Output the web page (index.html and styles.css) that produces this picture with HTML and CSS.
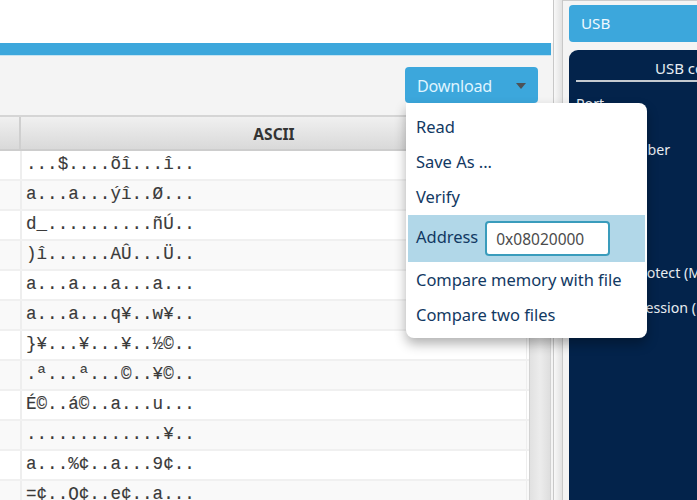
FILE: index.html
```html
<!DOCTYPE html>
<html lang="en">
<head>
<meta charset="utf-8">
<title>Device memory</title>
<link rel="stylesheet" href="styles.css">
</head>
<body>
<div class="app">
  <main class="memory">
    <div class="blank"></div>
    <div class="rule"></div>
    <div class="toolbar">
      <div class="download"><span>Download</span><i class="caret"></i>
        <div class="menu">
          <div class="item">Read</div>
          <div class="item">Save As ...</div>
          <div class="item">Verify</div>
          <div class="item active"><span>Address</span><div class="field">0x08020000</div></div>
          <div class="item">Compare memory with file</div>
          <div class="item">Compare two files</div>
        </div>
      </div>
    </div>
    <div class="table">
      <div class="head"><div class="c1"></div><div class="c2"><span>ASCII</span></div><div class="corner"></div></div>
      <div class="body">
        <div class="rows">
          <div class="row"><div class="c1"></div><div class="c2">...$....õî...î..</div></div>
          <div class="row"><div class="c1"></div><div class="c2">a...a...ýî..Ø...</div></div>
          <div class="row"><div class="c1"></div><div class="c2">d_..........ñÚ..</div></div>
          <div class="row"><div class="c1"></div><div class="c2">)î......AÛ...Ü..</div></div>
          <div class="row"><div class="c1"></div><div class="c2">a...a...a...a...</div></div>
          <div class="row"><div class="c1"></div><div class="c2">a...a...q¥..w¥..</div></div>
          <div class="row"><div class="c1"></div><div class="c2">}¥...¥...¥..½©..</div></div>
          <div class="row"><div class="c1"></div><div class="c2">.ª...ª...©..¥©..</div></div>
          <div class="row"><div class="c1"></div><div class="c2">É©..á©..a...u...</div></div>
          <div class="row"><div class="c1"></div><div class="c2">.............¥..</div></div>
          <div class="row"><div class="c1"></div><div class="c2">a...%¢..a...9¢..</div></div>
          <div class="row"><div class="c1"></div><div class="c2">=¢..Q¢..e¢..a...</div></div>
        </div>
        <div class="scrollbar"></div>
      </div>
    </div>
  </main>
  <div class="divider"></div>
  <aside class="side">
    <div class="select">USB</div>
    <div class="config">
      <div class="title">USB configuration</div>
      <div class="opt port">Port</div>
      <div class="opt serial">Serial number</div>
      <div class="opt read">Read Unprotect (MCU)</div>
      <div class="opt tz">TZEN Regression (MCU)</div>
    </div>
  </aside>
</div>
</body>
</html>
```
FILE: styles.css
```css
* { box-sizing: border-box; }
body {
  margin: 0;
  overflow: hidden;
  background: #f4f4f4;
  font: 16.5px/20px "Noto Sans", "Open Sans", sans-serif;
  color: #03234b;
  white-space: nowrap;
}
.app { display: flex; width: 697px; height: 500px; overflow: hidden; }
.memory { width: 553px; flex: none; display: flex; flex-direction: column; padding-right: 2px; }
.blank { height: 43px; flex: none; background: #fff; margin-right: -2px; }
.rule { height: 13px; flex: none; background: #3ca7dc; border-bottom: 1px solid #c5e3f1; }
.toolbar { height: 59px; flex: none; display: flex; justify-content: flex-end; padding: 11px 13px 0 0; }
.download {
  position: relative;
  z-index: 2;
  width: 133px;
  height: 36px;
  padding: 1px 12px 0;
  display: flex;
  align-items: center;
  justify-content: space-between;
  border-radius: 4px;
  background: #3ca7dc;
  color: #dff4ff;
}
.download > span { font-size: 16.2px; letter-spacing: -0.25px; }
.caret { border: 5px solid transparent; border-top: 6px solid #4d5256; border-bottom: 0; margin-top: 1px; }
.menu {
  position: absolute;
  left: 1px;
  top: 36px;
  width: 241px;
  height: 235px;
  padding: 7px 2px 0;
  border-radius: 0 8px 8px 8px;
  background: #fff;
  color: #123963;
  box-shadow: 0 6px 12px rgba(0, 0, 0, .3);
}
.item { height: 35px; padding: 0 8px 2px; display: flex; align-items: center; letter-spacing: -0.03px; }
.active { height: 47px; padding-bottom: 0; background: #b1d7e8; gap: 7px; }
.active ~ .item { padding-bottom: 0; }
.active span { margin-top: -4px; }
.field {
  width: 125px;
  height: 35px;
  padding: 0 9px;
  display: flex;
  align-items: center;
  border: 2px solid #3a9cbc;
  border-radius: 4px;
  background: #fff;
  color: #4b4b4b;
  font-size: 15.5px;
  letter-spacing: 0;
}
.table { flex: 1; min-height: 0; display: flex; flex-direction: column; }
.head {
  height: 36px;
  flex: none;
  display: flex;
  border-top: 2px solid #d5d5d5;
  border-bottom: 2px solid #cdcdcd;
  background: linear-gradient(#f0f0f0, #d9d9d9);
}
.c1 { width: 22px; flex: none; border-right: 2px solid #eee; }
.c2 { flex: 1; }
.head .c1 { width: 21px; border-right-color: #cfcfcf; }
.head .c2 {
  display: flex;
  align-items: center;
  justify-content: center;
  padding-top: 2px;
  font-size: 15.5px;
  font-weight: 700;
  color: #333;
}
.corner { width: 24px; border-left: 1px solid #ccc; }
.body { flex: 1; min-height: 0; display: flex; overflow: hidden; }
.rows { width: 529px; flex: none; }
.row { height: 30px; display: flex; border-bottom: 2px solid #f0f0f0; background: #fff; }
.row:nth-child(even) { background: #f9f9f9; }
.row .c2 {
  margin-right: 2px;
  padding-left: 4px;
  border-right: 1px solid #eee;
  font: 17.58px/27px "Liberation Mono", monospace;
  color: #3a3a3a;
  -webkit-text-stroke: .12px #3a3a3a;
}
.scrollbar { flex: 1; border: solid #d2d2d2; border-width: 0 1px; background: linear-gradient(90deg, #e1e1e1, #ececec 50%, #dedede); }
.divider {
  width: 10px;
  flex: none;
  border: solid #c8c8c8;
  border-width: 0 1px;
  background: linear-gradient(90deg, #f8f8f8, #e2e2e2);
}
.side { flex: 1; min-width: 0; padding: 4px 0 0 6px; border-top: 1px solid #ccc; }
.select {
  height: 37px;
  width: 180px;
  padding: 0 12px;
  line-height: 37px;
  border-radius: 4px;
  background: #3ca7dc;
  color: #eef9ff;
  font-size: 15.2px;
}
.config {
  width: 240px;
  height: 460px;
  margin-top: 8px;
  padding: 7px 7px 0;
  border-radius: 9px;
  background: #03234b;
  color: #e8edf2;
  font-size: 14.2px;
}
.title { height: 25px; padding-left: 79px; border-bottom: 2px solid #c5cad0; font-size: 15px; line-height: 23px; }
.opt { height: 20px; width: 124px; }
.port { margin-top: 12px; }
.serial { margin-top: 26px; width: 92px; }
.read { margin-top: 103px; }
.tz { margin-top: 15px; }
```
